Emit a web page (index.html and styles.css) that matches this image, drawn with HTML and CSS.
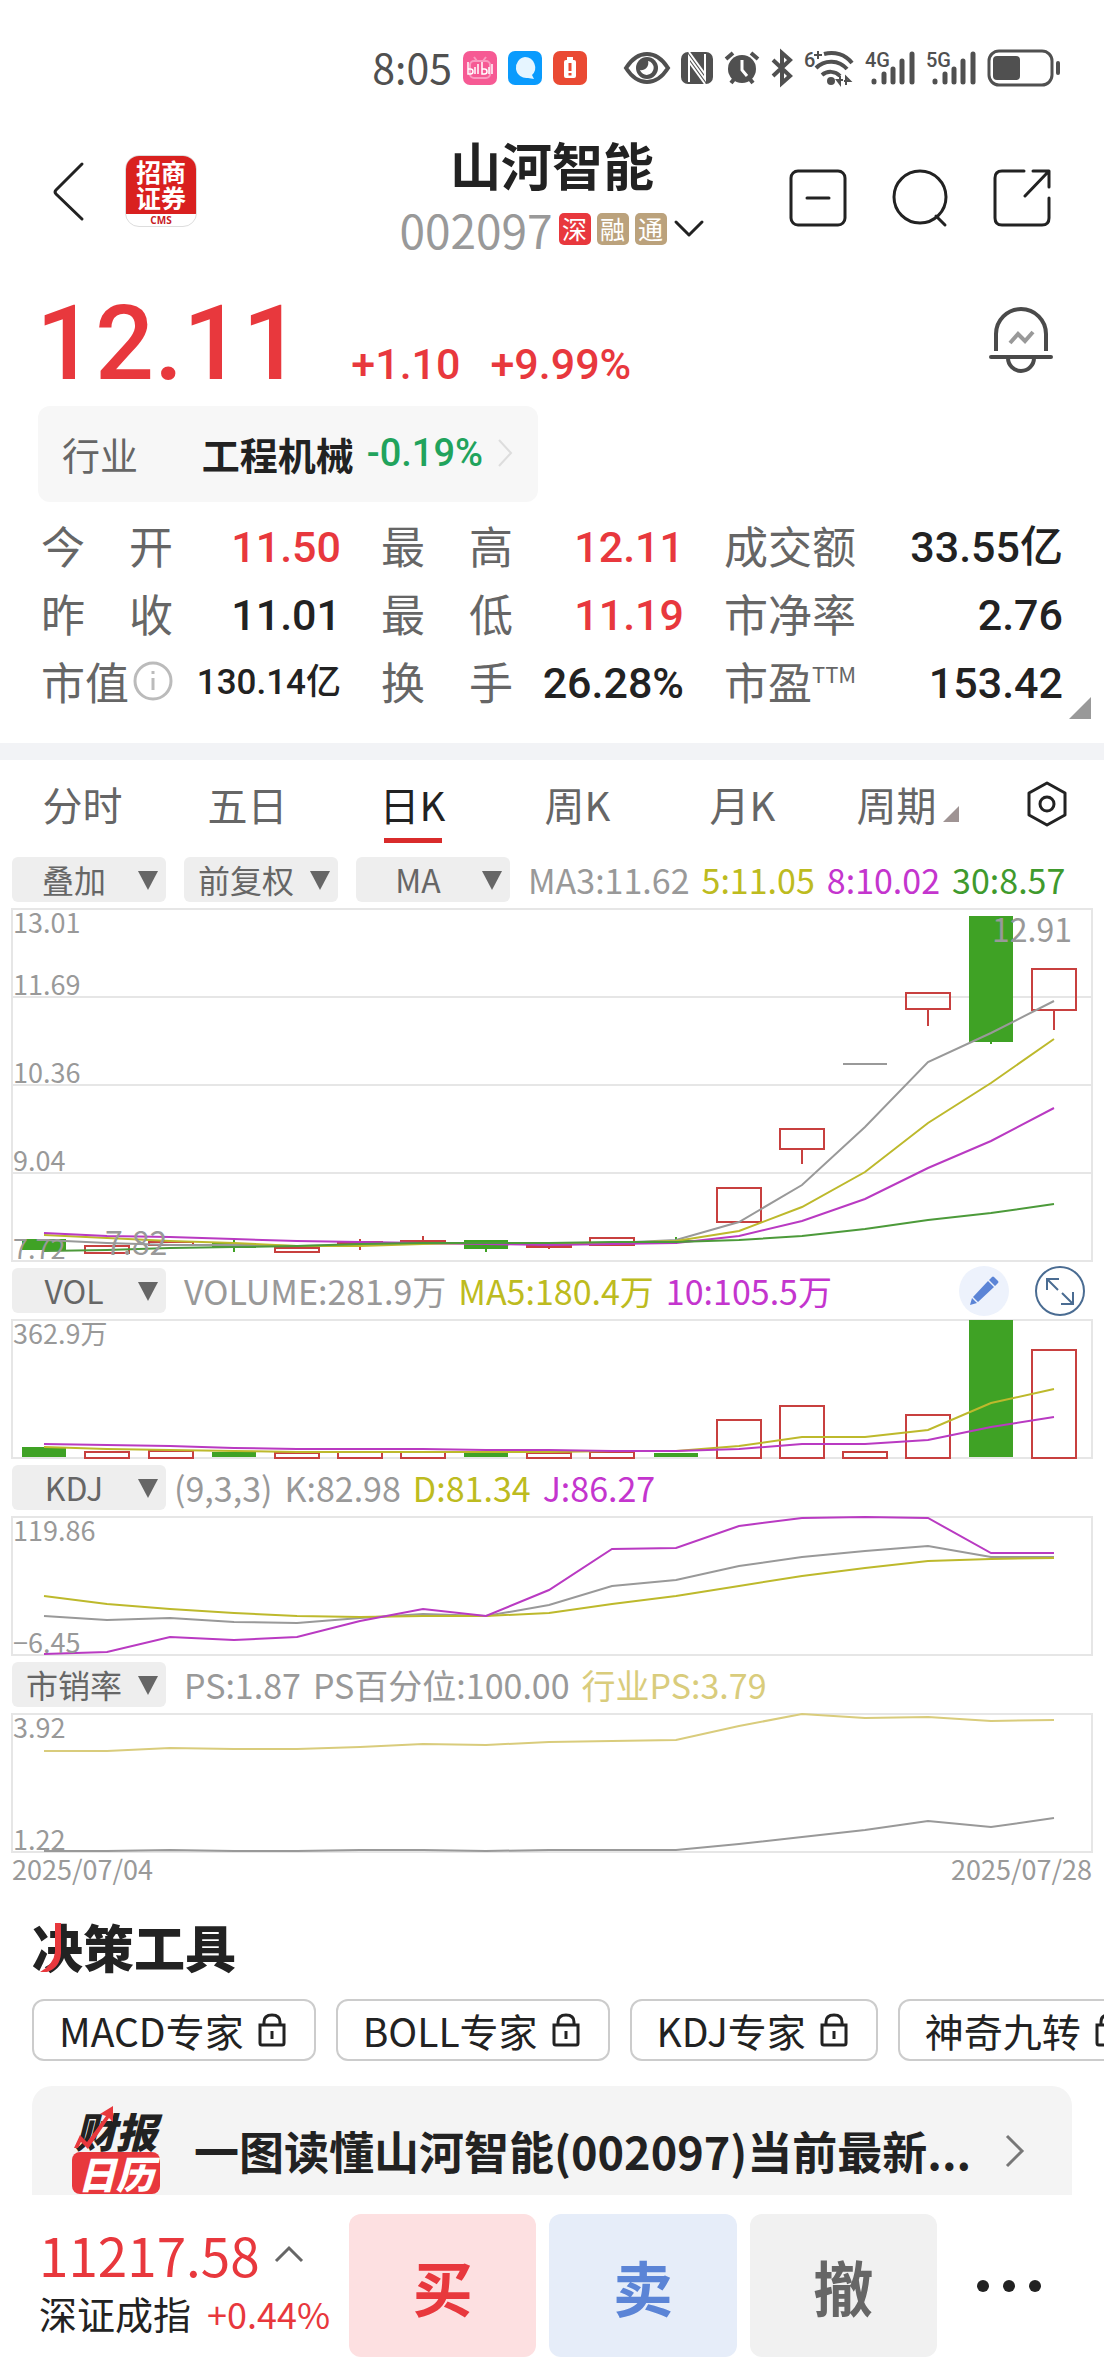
FILE: index.html
```html
<!DOCTYPE html>
<html lang="zh-CN">
<head>
    <meta charset="UTF-8">
    <meta name="viewport" content="width=device-width, initial-scale=1.0">
    <title>山河智能 002097</title>
    <link rel="stylesheet" href="styles.css">
</head>
<body>

<!-- 状态栏 -->
<div class="status-bar">
    <span class="clock">8:05</span>
    <svg width="34" height="34" viewBox="0 0 34 34">
        <rect width="34" height="34" rx="7" fill="#f65a94"/>
        <rect x="7" y="10" width="20" height="17" rx="4" fill="none" stroke="#f99abf" stroke-width="2"/>
        <path d="M11 6l3 4M23 6l-3 4" stroke="#f99abf" stroke-width="2"/>
        <path d="M5 11v12h2.500a2 2 0 0 0 0-5H5M12 16v7M15 13v10M19 11v12h2.500a2 2 0 0 0 0-5H19M26 16v7M29 13v10" fill="none" stroke="#fff" stroke-width="1.500"/>
    </svg>
    <svg width="34" height="34" viewBox="0 0 34 34">
        <rect width="34" height="34" rx="7" fill="#0a9bfd"/>
        <path d="M17 6a10.500 10.500 0 1 0 3 21l6 1-2-4A10.500 10.500 0 0 0 17 6z" fill="#e6f5ff"/>
    </svg>
    <svg width="34" height="34" viewBox="0 0 34 34">
        <rect width="34" height="34" rx="7" fill="#ea4a33"/>
        <rect x="11" y="9" width="12" height="18" rx="2" fill="#fff"/>
        <rect x="14" y="6" width="6" height="3" fill="#fff"/>
        <path d="M17 12v8M17 22v2.500" stroke="#ea4a33" stroke-width="3"/>
    </svg>
    <svg class="eye" width="46" height="34" viewBox="0 0 46 34">
        <path d="M2 17C9 6 16 3 23 3s14 3 21 14c-7 11-14 14-21 14S9 28 2 17z" fill="none" stroke="#505050" stroke-width="4"/>
        <circle cx="23" cy="17" r="11" fill="#505050"/>
        <path d="M24 10a7 7 0 0 1-8 9 7 7 0 1 0 8-9z" fill="#fff"/>
    </svg>
    <svg width="32" height="34" viewBox="0 0 32 34">
        <rect y="1" width="32" height="32" rx="7" fill="#505050"/>
        <path d="M8 31V6l16 22V3" fill="none" stroke="#fff" stroke-width="2"/>
        <path d="M8 1l16 22" stroke="#fff" stroke-width="2"/>
        <path d="M8 11l16 22" stroke="#fff" stroke-width="2"/>
    </svg>
    <svg width="36" height="34" viewBox="0 0 36 34">
        <circle cx="18" cy="18" r="14" fill="#505050"/>
        <path d="M2 8l7-6M34 8l-7-6M7 32l4-5M29 32l-4-5" stroke="#505050" stroke-width="4"/>
        <path d="M18 9v10l5 6" fill="none" stroke="#fff" stroke-width="3"/>
    </svg>
    <svg width="22" height="34" viewBox="0 0 22 34">
        <path d="M2 9l17 16-8 7V2l8 7L2 25" fill="none" stroke="#505050" stroke-width="4"/>
    </svg>
    <svg width="50" height="36" viewBox="0 0 50 36">
        <text x="0" y="17" class="net">6</text>
        <path d="M10 5h8M14 1v8" stroke="#505050" stroke-width="2"/>
        <path d="M20 4a26 26 0 0 1 28 9M12 18a21 21 0 0 1 31 1M18 25a13 13 0 0 1 18 1" fill="none" stroke="#505050" stroke-width="4"/>
        <circle cx="27" cy="31" r="4" fill="#505050"/>
        <path d="M36 26v8l-3-4h6M42 35v-8l4 4h-6" fill="none" stroke="#505050" stroke-width="2"/>
    </svg>
    <svg width="50" height="36" viewBox="0 0 50 36">
        <text x="0" y="17" class="net">4G</text>
        <path d="M9 31v1M19 24v8M28 19v13M37 11v21M47 4v28" stroke="#505050" stroke-width="5" stroke-linecap="round"/>
    </svg>
    <svg width="50" height="36" viewBox="0 0 50 36">
        <text x="0" y="17" class="net">5G</text>
        <path d="M9 31v1M19 24v8M28 19v13M37 11v21M47 4v28" stroke="#505050" stroke-width="5" stroke-linecap="round"/>
    </svg>
    <svg width="73" height="38" viewBox="0 0 73 38">
        <rect x="2" y="2" width="63" height="34" rx="10" fill="none" stroke="#505050" stroke-width="3"/>
        <rect x="6" y="7" width="27" height="24" rx="4" fill="#505050"/>
        <path d="M71 14v10" stroke="#505050" stroke-width="4" stroke-linecap="round"/>
    </svg>
</div>

<!-- 顶部标题 -->
<header class="header">
    <div class="header-left">
        <button class="icon-btn" aria-label="返回">
            <svg width="32" height="60" viewBox="0 0 32 60"><path d="M29 3L3 29q-2 2 0 4L29 58" class="line"/></svg>
        </button>
        <div class="logo">
            <span class="logo-name">招商<br>证券</span>
            <span class="logo-code">CMS</span>
        </div>
    </div>
    <div class="header-title">
        <h1>山河智能</h1>
        <div class="code-row">
            <span class="code">002097</span>
            <span class="badge badge-red">深</span>
            <span class="badge">融</span>
            <span class="badge">通</span>
            <svg width="32" height="20" viewBox="0 0 32 20"><path d="M3 3l13 13L29 3" class="line"/></svg>
        </div>
    </div>
    <div class="header-right">
        <button class="icon-btn" aria-label="移除自选">
            <svg width="58" height="58" viewBox="0 0 58 58"><rect x="2" y="2" width="54" height="54" rx="7" class="line"/><path d="M18 29h22" class="line"/></svg>
        </button>
        <button class="icon-btn" aria-label="搜索">
            <svg width="58" height="58" viewBox="0 0 58 58"><circle cx="29" cy="28" r="26" class="line"/><path d="M45 47l9 9" class="line"/></svg>
        </button>
        <button class="icon-btn" aria-label="分享">
            <svg width="58" height="58" viewBox="0 0 58 58"><path d="M31 2H9q-7 0-7 7v40q0 7 7 7h40q7 0 7-7V29M40 2h16v16M55 3L32 27" class="line"/></svg>
        </button>
    </div>
</header>

<main>
    <!-- 最新价 -->
    <section class="price-row">
        <span class="price">12.11</span>
        <span class="change">+1.10</span>
        <span class="change">+9.99%</span>
        <button class="icon-btn bell" aria-label="提醒">
            <svg width="66" height="68" viewBox="0 0 66 68">
                <path d="M8 45V28a25 25 0 0 1 50 0v17" fill="none" stroke="#4a4a4a" stroke-width="4"/>
                <path d="M3 51h60" stroke="#4a4a4a" stroke-width="4" stroke-linecap="round"/>
                <path d="M20 52a13 13 0 0 0 26 0" fill="none" stroke="#4a4a4a" stroke-width="4"/>
                <path d="M22 37l8-9 7 7 8-9" fill="none" stroke="#999" stroke-width="4"/>
            </svg>
        </button>
    </section>

    <a class="industry" href="#">
        <span class="industry-label">行业</span>
        <strong>工程机械</strong>
        <span class="down">-0.19%</span>
        <svg width="18" height="30" viewBox="0 0 18 30"><path d="M3 2l12 13L3 28" fill="none" stroke="#ddd" stroke-width="2"/></svg>
    </a>

    <dl class="stats">
        <div><dt><span>今</span><span>开</span></dt><dd class="up">11.50</dd></div>
        <div><dt><span>最</span><span>高</span></dt><dd class="up">12.11</dd></div>
        <div><dt>成交额</dt><dd>33.55亿</dd></div>
        <div><dt><span>昨</span><span>收</span></dt><dd>11.01</dd></div>
        <div><dt><span>最</span><span>低</span></dt><dd class="up">11.19</dd></div>
        <div><dt>市净率</dt><dd>2.76</dd></div>
        <div>
            <dt>市值
                <svg width="40" height="40" viewBox="0 0 40 40"><circle cx="20" cy="20" r="18" fill="none" stroke="#bbb" stroke-width="3"/><path d="M20 17v12M20 10v3" stroke="#bbb" stroke-width="3"/></svg>
            </dt>
            <dd class="small">130.14亿</dd>
        </div>
        <div><dt><span>换</span><span>手</span></dt><dd>26.28%</dd></div>
        <div><dt>市盈<sup>TTM</sup></dt><dd>153.42</dd></div>
    </dl>

    <!-- K线周期 -->
    <nav class="tabs">
        <button>分时</button>
        <button>五日</button>
        <button class="active">日K</button>
        <button>周K</button>
        <button>月K</button>
        <button>周期<i class="corner"></i></button>
        <button aria-label="设置">
            <svg width="42" height="46" viewBox="0 0 42 46"><path d="M21 2l18 10v22L21 44 3 34V12z" class="line"/><circle cx="21" cy="23" r="7" class="line"/></svg>
        </button>
    </nav>

    <section class="charts">
        <div class="chart-head">
            <label class="picker"><select aria-label="叠加"><option>叠加</option></select></label>
            <label class="picker"><select aria-label="复权"><option>前复权</option></select></label>
            <label class="picker"><select aria-label="主图指标"><option>MA</option></select></label>
            <p class="legend"><span>MA3:11.62</span><span class="c-yellow">5:11.05</span><span class="c-purple">8:10.02</span><span class="c-green">30:8.57</span></p>
        </div>
        <div class="chart chart-main">
            <svg viewBox="0 0 1080 352" preserveAspectRatio="none">
                <path class="grid" d="M0 0h1080v352H0zM0 88h1080M0 176h1080M0 264h1080"/>
                <g class="fall">
                    <path d="M10 330h44v11H10zM200 334h44v5h-44zM452 331h44v9h-44zM642 331h44v2h-44zM957 7h44v126h-44z"/>
                    <path class="wick" d="M222 331v12M474 331v12M664 328v7M979 7v128"/>
                </g>
                <g class="rise">
                    <path d="M73 337h44v7H73zM137 333h44v3h-44zM263 339h44v4h-44zM326 333h44v1h-44zM389 332h44v1h-44zM515 337h44v1h-44zM578 329h44v7h-44zM705 279h44v34h-44zM768 220h44v20h-44zM894 84h44v16h-44zM1020 60h44v41h-44z"/>
                    <path d="M348 330v11M411 327v6M537 337v3M790 240v15M916 100v17M1042 101v20"/>
                </g>
                <path class="flat" d="M831 155h44"/>
                <polyline class="s-gray" points="32,331 95,334 158,336 222,336 285,337 348,336 411,334 474,334 537,334 600,334 664,331 727,313 790,276 853,218 916,153 979,124 1042,92"/>
                <polyline class="s-yellow" points="32,326 95,329 158,332 222,334 285,337 348,337 411,335 474,334 537,334 600,334 664,332 727,322 790,298 853,263 916,214 979,174 1042,130"/>
                <polyline class="s-purple" points="32,324 95,327 158,328 222,330 285,332 348,333 411,334 474,335 537,336 600,335 664,334 727,327 790,312 853,290 916,259 979,232 1042,199"/>
                <polyline class="s-green" points="32,342 95,341 158,339 222,338 285,337 348,335 411,334 474,334 537,334 600,333 664,333 727,331 790,327 853,320 916,311 979,304 1042,295"/>
            </svg>
            <div class="axis"><span>13.01</span><span>11.69</span></div>
            <div class="axis"><span>10.36</span></div>
            <div class="axis"><span>9.04</span></div>
            <div class="axis"><span>7.72</span></div>
            <span class="mark mark-high">12.91</span>
            <span class="mark mark-low">7.82</span>
        </div>

        <div class="chart-head">
            <label class="picker"><select aria-label="副图指标一"><option>VOL</option></select></label>
            <p class="legend"><span>VOLUME:281.9万</span><span class="c-yellow">MA5:180.4万</span><span class="c-purple">10:105.5万</span></p>
            <button class="icon-btn tool-first" aria-label="画线">
                <svg width="50" height="50" viewBox="0 0 50 50"><circle cx="25" cy="25" r="25" fill="#edf2fc"/><path d="M11 39l2-7 5 5zM14 31L29 15l6 6-16 15zM30 14l3-3q1-1 2 0l4 4q1 1 0 2l-3 3z" fill="#5b84d6"/></svg>
            </button>
            <button class="icon-btn" aria-label="全屏">
                <svg width="50" height="50" viewBox="0 0 50 50" fill="none" stroke="#4a6c92" stroke-width="2"><circle cx="25" cy="25" r="24"/><path d="M12 24V13h12M12 13l11 11M38 26v12H26M38 38L27 27"/></svg>
            </button>
        </div>
        <div class="chart">
            <svg viewBox="0 0 1080 138" preserveAspectRatio="none">
                <path class="grid" d="M0 0h1080v138H0z"/>
                <path class="fall" d="M10 127h44v10H10zM200 132h44v5h-44zM452 132h44v5h-44zM642 133h44v4h-44zM957 0h44v137h-44z"/>
                <path class="rise" d="M73 132h44v6H73zM137 131h44v7h-44zM263 133h44v5h-44zM326 132h44v6h-44zM389 132h44v6h-44zM515 133h44v5h-44zM578 132h44v6h-44zM705 100h44v38h-44zM768 86h44v52h-44zM831 132h44v6h-44zM894 95h44v43h-44zM1020 30h44v108h-44z"/>
                <polyline class="s-yellow" points="32,127 95,129 158,130 222,131 285,132 348,132 411,132 474,132 537,132 600,131 664,131 727,126 790,117 853,117 916,110 979,83 1042,69"/>
                <polyline class="s-purple" points="32,124 95,125 158,126 222,128 285,129 348,129 411,129 474,130 537,130 600,131 664,131 727,129 790,124 853,124 916,120 979,107 1042,97"/>
            </svg>
            <div class="axis"><span>362.9万</span></div>
        </div>

        <div class="chart-head tight">
            <label class="picker"><select aria-label="副图指标二"><option>KDJ</option></select></label>
            <p class="legend"><span>(9,3,3)</span><span>K:82.98</span><span class="c-yellow">D:81.34</span><span class="c-purple">J:86.27</span></p>
        </div>
        <div class="chart">
            <svg viewBox="0 0 1080 138" preserveAspectRatio="none">
                <path class="grid" d="M0 0h1080v138H0z"/>
                <polyline class="s-gray" points="32,99 95,103 158,101 222,105 285,106 348,101 411,97 474,99 537,88 600,69 664,63 727,49 790,40 853,34 916,29 979,40 1042,40"/>
                <polyline class="s-yellow" points="32,79 95,87 158,92 222,96 285,99 348,100 411,99 474,99 537,96 600,87 664,79 727,69 790,59 853,51 916,44 979,42 1042,41"/>
                <polyline class="s-purple" points="32,137 95,135 158,120 222,123 285,120 348,104 411,92 474,99 537,73 600,32 664,31 727,9 790,1 853,0 916,1 979,36 1042,36"/>
            </svg>
            <div class="axis"><span>119.86</span><span>−6.45</span></div>
        </div>

        <div class="chart-head">
            <label class="picker"><select aria-label="副图指标三"><option>市销率</option></select></label>
            <p class="legend"><span>PS:1.87</span><span>PS百分位:100.00</span><span class="c-sand">行业PS:3.79</span></p>
        </div>
        <div class="chart">
            <svg viewBox="0 0 1080 138" preserveAspectRatio="none">
                <path class="grid" d="M0 0h1080v138H0z"/>
                <polyline class="s-sand" points="32,37 95,37 158,34 222,35 285,35 348,33 411,30 474,31 537,28 600,27 664,26 727,12 790,0 853,4 916,3 979,7 1042,6"/>
                <polyline class="s-gray" points="32,137 95,137 158,136 222,137 285,137 348,136 411,136 474,137 537,136 600,136 664,136 727,130 790,123 853,116 916,107 979,113 1042,104"/>
            </svg>
            <div class="axis"><span>3.92</span><span>1.22</span></div>
        </div>
        <div class="dates"><span>2025/07/04</span><span>2025/07/28</span></div>
    </section>

    <!-- 决策工具 -->
    <section class="tools">
        <h2>决策工具
            <svg class="slash" width="24" height="50" viewBox="0 0 24 50"><path d="M15 0h6v30q-1 15-14 19H0q14-8 15-20z" fill="#e8383d"/></svg>
        </h2>
        <div class="pills">
            <button>MACD专家<svg width="28" height="34" viewBox="0 0 28 34"><use href="#lock"/></svg></button>
            <button>BOLL专家<svg width="28" height="34" viewBox="0 0 28 34"><use href="#lock"/></svg></button>
            <button>KDJ专家<svg width="28" height="34" viewBox="0 0 28 34"><use href="#lock"/></svg></button>
            <button>神奇九转<svg width="28" height="34" viewBox="0 0 28 34"><use href="#lock"/></svg></button>
        </div>
        <a class="report" href="#">
            <span class="report-logo">
                <span class="report-top">财报
                    <svg class="arrow" width="44" height="44" viewBox="0 0 44 44"><path d="M2 42l6-13 7 7L34 10l-6-2L41 0v16l-4-4-21 31-7-7-3 6z" fill="#e8383d"/></svg>
                </span>
                <span class="report-bottom">日历</span>
            </span>
            <span class="report-text">一图读懂山河智能(002097)当前最新...</span>
            <svg width="20" height="36" viewBox="0 0 20 36"><path d="M2 3l15 15L2 33" fill="none" stroke="#777" stroke-width="3"/></svg>
        </a>
    </section>
</main>

<!-- 底部交易栏 -->
<footer class="footer">
    <div class="index">
        <div class="index-value">11217.58 <svg width="30" height="18" viewBox="0 0 30 18"><path d="M2 16L15 3l13 13" fill="none" stroke="#666" stroke-width="3"/></svg></div>
        <div class="index-name">深证成指 <span class="up">+0.44%</span></div>
    </div>
    <button class="trade buy">买</button>
    <button class="trade sell">卖</button>
    <button class="trade cancel">撤</button>
    <button class="icon-btn more" aria-label="更多">
        <svg width="66" height="14" viewBox="0 0 66 14" fill="#222"><circle cx="7" cy="7" r="6"/><circle cx="33" cy="7" r="6"/><circle cx="59" cy="7" r="6"/></svg>
    </button>
</footer>

<svg width="0" height="0" class="defs">
    <symbol id="lock" viewBox="0 0 28 34">
        <path d="M2 12h24v18q0 2-2 2H4q-2 0-2-2zM6 12V9q0-7 8-7t8 7v3M14 18v8" fill="none" stroke="#222" stroke-width="3"/>
    </symbol>
</svg>

</body>
</html>
```
FILE: styles.css
```css
* {
    box-sizing: border-box;
}

body {
    margin: 0;
    min-height: 100vh;
    display: flex;
    flex-direction: column;
    background: #fff;
    color: #222;
    font-family: "Noto Sans CJK SC", sans-serif;
    overflow-x: hidden;
}

main {
    flex: 1;
}

svg {
    display: block;
    flex: none;
    overflow: visible;
}

button {
    font-family: inherit;
    color: inherit;
    border: none;
    background: none;
    padding: 0;
    cursor: pointer;
}

a {
    color: inherit;
    text-decoration: none;
}

h1, h2, p, dl, dd {
    margin: 0;
}

.line {
    fill: none;
    stroke: #222;
    stroke-width: 3;
    stroke-linecap: round;
    stroke-linejoin: round;
}

.defs {
    position: absolute;
}

.up {
    color: #e8383d;
}

.down {
    color: #21a35c;
}

/* 数字用 Roboto */
.price,
.change,
.down,
.stats dd {
    font-family: Roboto, "Noto Sans CJK SC", sans-serif;
    font-weight: 500;
}

/* 状态栏 */
.status-bar {
    height: 136px;
    padding-right: 44px;
    display: flex;
    justify-content: flex-end;
    align-items: center;
    gap: 11px;
}

.clock {
    font-size: 41px;
    line-height: 50px;
    margin-bottom: 4px;
    color: #505050;
}

.eye {
    margin-left: 26px;
}

.net {
    font-family: Roboto, sans-serif;
    font-size: 20px;
    font-weight: 500;
    fill: #505050;
}

/* 顶部标题 */
.header {
    height: 129px;
    padding: 0 53px 6px;
    display: grid;
    grid-template-columns: 1fr auto 1fr;
    grid-template-rows: 123px;
    align-items: center;
}

.header-left,
.header-right {
    display: flex;
    align-items: center;
    gap: 44px;
}

.header-left {
    gap: 40px;
    padding-bottom: 14px;
}

.header-right {
    justify-content: flex-end;
}

.logo {
    width: 72px;
    height: 72px;
    border-radius: 14px;
    border: 1px solid #ddd;
    overflow: hidden;
    display: flex;
    flex-direction: column;
    text-align: center;
}

.logo-name {
    height: 58px;
    padding-top: 2px;
    background: #d9201f;
    color: #fff;
    font-size: 25px;
    font-weight: 700;
    line-height: 26px;
}

.logo-code {
    color: #c8201f;
    font-family: "Open Sans", sans-serif;
    font-size: 10px;
    font-weight: 700;
    line-height: 12px;
}

.header-title {
    text-align: center;
}

h1 {
    font-size: 51px;
    font-weight: 700;
    line-height: 62px;
}

.code-row {
    height: 67px;
    display: flex;
    align-items: center;
    gap: 6px;
}

.code {
    font-size: 46px;
    line-height: 66px;
    color: #999;
}

.badge {
    width: 32px;
    height: 32px;
    border-radius: 5px;
    background: #bba27c;
    color: #fff;
    font-size: 25px;
    line-height: 31px;
}

.badge-red {
    background: #e8383d;
}

/* 最新价 */
.price-row {
    height: 141px;
    padding: 8px 50px 0 36px;
    display: flex;
    align-items: baseline;
    gap: 30px;
    line-height: 141px;
    color: #e8383d;
}

.price {
    font-size: 104px;
    margin-right: 20px;
}

.change {
    font-size: 43px;
}

.bell {
    margin-left: auto;
    align-self: center;
}

.industry {
    width: 500px;
    height: 96px;
    margin-left: 38px;
    padding: 0 24px 2px;
    border-radius: 12px;
    background: #f7f7f7;
    display: flex;
    align-items: center;
    gap: 13px;
    font-size: 38px;
}

.industry-label {
    color: #666;
    margin-right: auto;
}

/* 行情数据 */
.stats {
    position: relative;
    margin-top: 9px;
    padding: 0 41px 28px;
    display: grid;
    grid-template-columns: 300fr 303fr 339fr;
    column-gap: 40px;
    border-bottom: 17px solid #f2f3f6;
}

.stats::after {
    content: "";
    position: absolute;
    right: 13px;
    bottom: 24px;
    border-left: 22px solid transparent;
    border-bottom: 22px solid #999;
}

.stats div {
    height: 68px;
    display: flex;
    justify-content: space-between;
    align-items: center;
    white-space: nowrap;
}

.stats dt {
    width: 132px;
    display: flex;
    align-items: center;
    justify-content: space-between;
    font-size: 44px;
    line-height: 68px;
    color: #666;
}

.stats dd {
    padding-top: 4px;
    font-size: 43px;
    line-height: 64px;
}

.stats .small {
    font-size: 35px;
}

.stats sup {
    align-self: flex-start;
    font-size: 22px;
    line-height: 52px;
}

/* K线周期 */
.tabs {
    display: grid;
    grid-template-columns: repeat(6, 165fr) 114fr;
}

.tabs button {
    position: relative;
    height: 88px;
    display: flex;
    align-items: center;
    justify-content: center;
    font-size: 40px;
    color: #666;
}

.tabs .active {
    color: #222;
}

.tabs .active::after {
    content: "";
    position: absolute;
    bottom: 5px;
    width: 58px;
    height: 5px;
    background: #d92b2b;
}

.corner {
    margin: 20px 0 0 6px;
    border-left: 16px solid transparent;
    border-bottom: 16px solid #9f9494;
}

/* 图表 */
.charts {
    padding: 2px 12px 0;
}

.chart-head {
    height: 59px;
    padding-right: 7px;
    display: flex;
    align-items: center;
    gap: 18px;
}

.chart-head.tight {
    gap: 8px;
}

.picker {
    position: relative;
    width: 154px;
    height: 45px;
}

.picker select {
    appearance: none;
    width: 100%;
    height: 100%;
    padding: 0 30px 0 0;
    border: none;
    border-radius: 6px;
    background: #eee;
    color: #666;
    font-family: inherit;
    font-size: 32px;
    line-height: 45px;
    text-align: center;
}

.picker::after {
    content: "";
    position: absolute;
    top: 14px;
    right: 8px;
    border: 10px solid transparent;
    border-top: 19px solid #666;
    border-bottom: 0;
    pointer-events: none;
}

.legend {
    display: flex;
    gap: 12px;
    font-size: 34px;
    line-height: 45px;
    color: #999;
    white-space: nowrap;
}

.c-yellow { color: #bdbb20; }
.c-purple { color: #c435ce; }
.c-green { color: #3f9a2d; }
.c-sand { color: #d9cc7c; }

.tool-first {
    margin-left: auto;
    margin-right: 8px;
}

.chart {
    position: relative;
    height: 138px;
    display: flex;
    flex-direction: column;
}

.chart-main {
    height: 352px;
}

.chart svg {
    position: absolute;
    width: 100%;
    height: 100%;
}

.chart path,
.chart polyline {
    fill: none;
    stroke-width: 2;
    vector-effect: non-scaling-stroke;
}

.chart .grid { stroke: #e6e6e6; }
.chart .flat { stroke: #999; }
.chart .rise { stroke: #c8403f; }
.s-gray { stroke: #999; }
.s-yellow { stroke: #bdb92c; }
.s-purple { stroke: #b93ac2; }
.s-green { stroke: #4c9a3a; }
.s-sand { stroke: #d9cc7c; }

.chart .fall,
.chart .fall path {
    fill: #3fa225;
}

.chart .wick {
    stroke: #3fa225;
}

.axis {
    position: relative;
    flex: 1;
    display: flex;
    flex-direction: column;
    justify-content: space-between;
    padding: 0 1px;
    font-size: 27px;
    line-height: 26px;
    color: #999;
}

.chart-main .axis:not(:nth-child(2)) {
    justify-content: flex-end;
}

.mark {
    position: absolute;
    font-size: 32px;
    line-height: 32px;
    color: #999;
}

.mark-high {
    top: 3px;
    right: 20px;
}

.mark-low {
    bottom: 4px;
    left: 93px;
}

.dates {
    height: 34px;
    margin-bottom: 4px;
    display: flex;
    align-items: center;
    justify-content: space-between;
    font-size: 27px;
    line-height: 34px;
    color: #999;
}

/* 决策工具 */
.tools {
    padding: 26px 32px 0;
}

h2 {
    position: relative;
    font-size: 51px;
    font-weight: 900;
    line-height: 60px;
}

.slash {
    position: absolute;
    top: 7px;
    left: 8px;
}

.pills {
    margin: 23px -32px 0 0;
    display: flex;
    gap: 20px;
    overflow: hidden;
}

.pills button {
    flex: none;
    height: 62px;
    padding: 0 28px 0 25px;
    border: 2px solid #ccc;
    border-radius: 12px;
    display: flex;
    align-items: center;
    gap: 14px;
    font-size: 39px;
    line-height: 54px;
}

.report {
    height: 109px;
    margin-top: 25px;
    padding: 20px 47px 0 40px;
    border-radius: 20px 20px 0 0;
    background: #f4f4f4;
    display: flex;
    align-items: center;
    gap: 34px;
}

.report-logo {
    width: 88px;
    display: flex;
    flex-direction: column;
    font-weight: 900;
    font-style: italic;
    text-align: center;
}

.report-top {
    position: relative;
    font-size: 41px;
    line-height: 44px;
}

.arrow {
    position: absolute;
    top: -2px;
    left: 0;
}

.report-bottom {
    border-radius: 8px;
    background: #e8383d;
    color: #fff;
    font-size: 38px;
    line-height: 42px;
}

.report-text {
    flex: 1;
    font-size: 45px;
    font-weight: 700;
    line-height: 88px;
    white-space: nowrap;
    overflow: hidden;
}

/* 底部交易栏 */
.footer {
    height: 181px;
    padding: 0 62px 0 39px;
    display: flex;
    align-items: center;
    gap: 13px;
}

.index {
    width: 297px;
    padding-bottom: 10px;
    white-space: nowrap;
}

.index-value {
    display: flex;
    align-items: center;
    gap: 14px;
    font-size: 53px;
    line-height: 64px;
    color: #e8383d;
}

.index-name {
    display: flex;
    align-items: center;
    gap: 16px;
    font-size: 38px;
    line-height: 54px;
}

.index-name span {
    font-size: 36px;
}

.trade {
    flex: 1;
    height: 143px;
    border-radius: 12px;
    font-size: 60px;
    font-weight: 700;
    line-height: 80px;
}

.buy {
    background: #fde0e1;
    color: #e8383d;
}

.sell {
    background: #e6edf9;
    color: #5b84d6;
}

.cancel {
    background: #f1f1f1;
    color: #666;
}

.more {
    margin-left: 26px;
}
```
